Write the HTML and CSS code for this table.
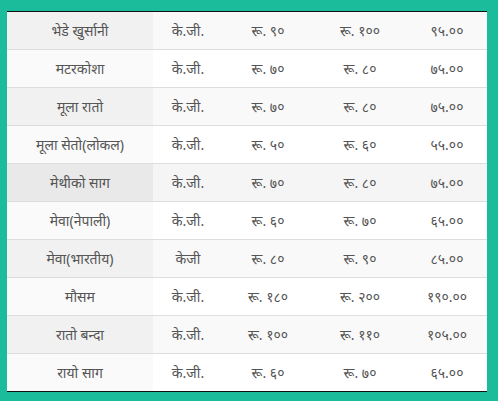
FILE: index.html
```html
<!DOCTYPE html>
<html>
<head>
<meta charset="utf-8">
<link rel="stylesheet" href="styles.css">
</head>
<body>
<div class="wrap">
<table class="prices">
<colgroup>
<col class="c1"><col class="c2"><col class="c3"><col class="c4"><col class="c5">
</colgroup>
<tbody>
<tr class="odd"><td class="sort">भेडे खुर्सानी</td><td>के.जी.</td><td>रू. ९०</td><td>रू. १००</td><td>९५.००</td></tr>
<tr class="even"><td class="sort">मटरकोशा</td><td>के.जी.</td><td>रू. ७०</td><td>रू. ८०</td><td>७५.००</td></tr>
<tr class="odd"><td class="sort">मूला रातो</td><td>के.जी.</td><td>रू. ७०</td><td>रू. ८०</td><td>७५.००</td></tr>
<tr class="even"><td class="sort">मूला सेतो(लोकल)</td><td>के.जी.</td><td>रू. ५०</td><td>रू. ६०</td><td>५५.००</td></tr>
<tr class="odd hover"><td class="sort">मेथीको साग</td><td>के.जी.</td><td>रू. ७०</td><td>रू. ८०</td><td>७५.००</td></tr>
<tr class="even"><td class="sort">मेवा(नेपाली)</td><td>के.जी.</td><td>रू. ६०</td><td>रू. ७०</td><td>६५.००</td></tr>
<tr class="odd"><td class="sort">मेवा(भारतीय)</td><td>केजी</td><td>रू. ८०</td><td>रू. ९०</td><td>८५.००</td></tr>
<tr class="even"><td class="sort">मौसम</td><td>के.जी.</td><td>रू. १८०</td><td>रू. २००</td><td>१९०.००</td></tr>
<tr class="odd"><td class="sort">रातो बन्दा</td><td>के.जी.</td><td>रू. १००</td><td>रू. ११०</td><td>१०५.००</td></tr>
<tr class="even"><td class="sort">रायो साग</td><td>के.जी.</td><td>रू. ६०</td><td>रू. ७०</td><td>६५.००</td></tr>
</tbody>
</table>
</div>
</body>
</html>
```
FILE: styles.css
```css
html, body {
  margin: 0;
  padding: 0;
  background: #1abc9c;
}
.wrap {
  padding: 11px 11px 10px 7px;
}
.prices {
  width: 480px;
  border-collapse: collapse;
  table-layout: fixed;
  border-top: 1px solid #111;
  border-bottom: 1px solid #111;
  font-family: "Noto Sans", "Noto Sans Devanagari", sans-serif;
  font-size: 14px;
  color: #555;
}
.c1 { width: 146px; }
.c2 { width: 70px; }
.c3 { width: 90px; }
.c4 { width: 94px; }
.c5 { width: 80px; }
.prices td {
  height: 37px;
  padding: 0;
  text-align: center;
  vertical-align: middle;
  border-top: 1px solid #ddd;
}
.prices tr:first-child td { border-top: none; }
.odd td { background: #f9f9f9; }
.odd td.sort { background: #f1f1f1; }
.even td { background: #fff; }
.even td.sort { background: #fafafa; }
.hover td { background: #f5f5f5; }
.hover td.sort { background: #e9e9e9; }
```
